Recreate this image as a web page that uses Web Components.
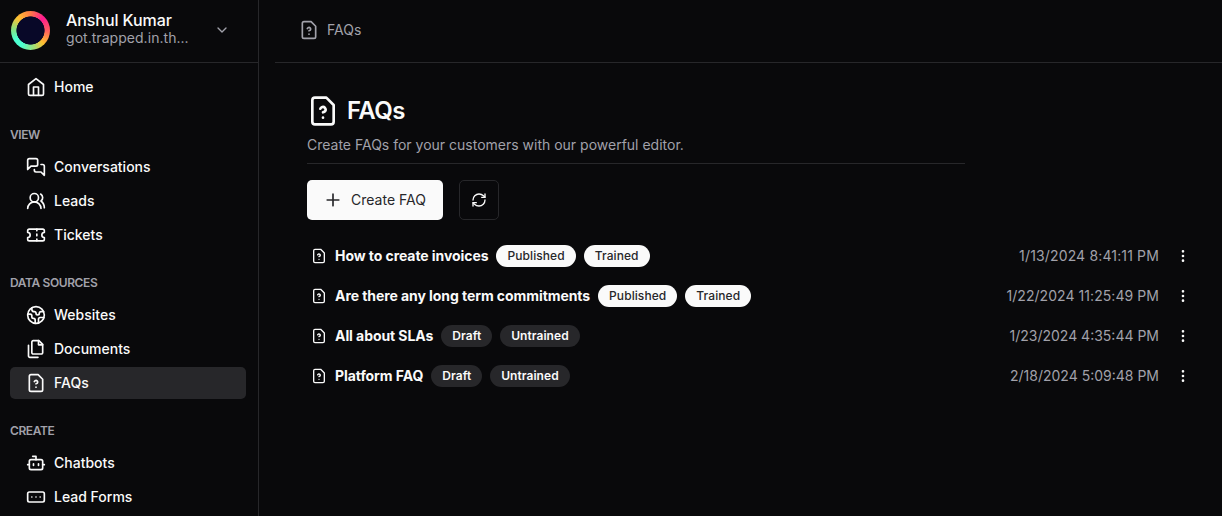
<!DOCTYPE html>
<html lang="en">
<head>
<meta charset="utf-8">
<title>FAQs</title>
<style>
html,body{margin:0;height:100%;background:#09090b;overflow:hidden}
body{font-family:Inter,"Liberation Sans",sans-serif;color:#fafafa;font-size:14px;line-height:20px}
</style>
</head>
<body>
<app-shell>
  <side-bar slot="side">
    <user-menu slot="user" name="Anshul Kumar" mail="got.trapped.in.th..."></user-menu>
    <nav-item icon="home">Home</nav-item>
    <nav-group label="VIEW">
      <nav-item icon="messages">Conversations</nav-item>
      <nav-item icon="users">Leads</nav-item>
      <nav-item icon="ticket">Tickets</nav-item>
    </nav-group>
    <nav-group label="DATA SOURCES">
      <nav-item icon="earth">Websites</nav-item>
      <nav-item icon="files">Documents</nav-item>
      <nav-item icon="faq" active>FAQs</nav-item>
    </nav-group>
    <nav-group label="CREATE">
      <nav-item icon="bot">Chatbots</nav-item>
      <nav-item icon="form">Lead Forms</nav-item>
    </nav-group>
  </side-bar>
  <top-bar icon="faq">FAQs</top-bar>
  <page-heading icon="faq"><span slot="title">FAQs</span>Create FAQs for your customers with our powerful editor.</page-heading>
  <action-bar>Create FAQ</action-bar>
  <faq-row style="--date-tracking:.15px" date="1/13/2024 8:41:11 PM">How to create invoices<status-badge slot="tags" on>Published</status-badge><status-badge slot="tags" on>Trained</status-badge></faq-row>
  <faq-row style="--date-tracking:.06px" date="1/22/2024 11:25:49 PM">Are there any long term commitments<status-badge slot="tags" on>Published</status-badge><status-badge slot="tags" on>Trained</status-badge></faq-row>
  <faq-row date="1/23/2024 4:35:44 PM">All about SLAs<status-badge slot="tags">Draft</status-badge><status-badge slot="tags">Untrained</status-badge></faq-row>
  <faq-row date="2/18/2024 5:09:48 PM">Platform FAQ<status-badge slot="tags">Draft</status-badge><status-badge slot="tags">Untrained</status-badge></faq-row>
</app-shell>
<script>
const ICONS = {
  home:'<path d="m3 9 9-7 9 7v11a2 2 0 0 1-2 2H5a2 2 0 0 1-2-2z"/><path d="M9 22V12h6v10"/>',
  messages:'<path d="M14 9a2 2 0 0 1-2 2H6l-4 4V4c0-1.1.9-2 2-2h8a2 2 0 0 1 2 2v5Z"/><path d="M18 9h2a2 2 0 0 1 2 2v11l-4-4h-6a2 2 0 0 1-2-2v-1"/>',
  users:'<path d="M18 21a8 8 0 0 0-16 0"/><circle cx="10" cy="8" r="5"/><path d="M22 20c0-3.37-2-6.5-4-8a5 5 0 0 0-.45-8.3"/>',
  ticket:'<path d="M2 9a3 3 0 0 1 0 6v2a2 2 0 0 0 2 2h16a2 2 0 0 0 2-2v-2a3 3 0 0 1 0-6V7a2 2 0 0 0-2-2H4a2 2 0 0 0-2 2Z"/><path d="M13 5v2M13 17v2M13 11v2"/>',
  earth:'<path d="M21.54 15H17a2 2 0 0 0-2 2v4.54"/><path d="M7 3.34V5a3 3 0 0 0 3 3a2 2 0 0 1 2 2c0 1.1.9 2 2 2a2 2 0 0 0 2-2c0-1.1.9-2 2-2h3.17"/><path d="M11 21.95V18a2 2 0 0 0-2-2a2 2 0 0 1-2-2v-1a2 2 0 0 0-2-2H2.05"/><circle cx="12" cy="12" r="10"/>',
  files:'<path d="M15.5 2H8.6c-.4 0-.8.2-1.1.5-.3.3-.5.7-.5 1.1v12.8c0 .4.2.8.5 1.1.3.3.7.5 1.1.5h9.8c.4 0 .8-.2 1.1-.5.3-.3.5-.7.5-1.1V6.5L15.5 2z"/><path d="M3 7.6v12.8c0 .4.2.8.5 1.1.3.3.7.5 1.1.5h9.8"/><path d="M15 2v5h5"/>',
  faq:'<path d="M14.5 2H6a2 2 0 0 0-2 2v16a2 2 0 0 0 2 2h12a2 2 0 0 0 2-2V7.5L14.5 2z"/><path d="M10 10.3c.2-.4.5-.8.9-1a2.1 2.1 0 0 1 2.6.4c.3.4.5.8.5 1.3 0 1.3-2 2-2 2"/><path d="M12 17h.01"/>',
  bot:'<path d="M12 8V4H8"/><rect width="16" height="12" x="4" y="8" rx="2"/><path d="M2 14h2M20 14h2M15 13v2M9 13v2"/>',
  form:'<rect width="20" height="12" x="2" y="6" rx="2"/><path d="M12 12h.01M17 12h.01M7 12h.01"/>',
  refresh:'<path d="M3 12a9 9 0 0 1 9-9 9.75 9.75 0 0 1 6.74 2.74L21 8"/><path d="M21 3v5h-5"/><path d="M21 12a9 9 0 0 1-9 9 9.75 9.75 0 0 1-6.74-2.74L3 16"/><path d="M8 16H3v5"/>',
  plus:'<path d="M5 12h14M12 5v14"/>',
  down:'<path d="m6 9 6 6 6-6"/>',
  more:'<circle cx="12" cy="12" r="1"/><circle cx="12" cy="5" r="1"/><circle cx="12" cy="19" r="1"/>'
};
const define = (name, render) => customElements.define(name, class extends HTMLElement {
  connectedCallback() {
    if (this.shadowRoot) return;
    this.attachShadow({mode:'open'}).innerHTML = render(this);
  }
});
const icon = (name, size) => `<ui-icon name="${name}" size="${size}"></ui-icon>`;

define('ui-icon', e => `<style>:host{display:block;flex:none;width:${e.getAttribute('size')}px;height:${e.getAttribute('size')}px}svg{display:block;width:100%;height:100%}</style>
<svg viewBox="0 0 24 24" fill="none" stroke="currentColor" stroke-width="2" stroke-linecap="round" stroke-linejoin="round">${ICONS[e.getAttribute('name')]}</svg>`);

define('app-shell', () => `<style>:host{display:flex;height:100vh}main{flex:1;min-width:0;padding-left:16px}</style>
<slot name="side"></slot><main><slot></slot></main>`);

define('side-bar', () => `<style>:host{display:block;flex:none;box-sizing:border-box;width:259px;height:100%;overflow:hidden;border-right:1px solid #27272a}nav{padding:8px 12px 0 10px}</style>
<slot name="user"></slot><nav><slot></slot></nav>`);

define('user-menu', e => `<style>
:host{display:flex;align-items:center;box-sizing:border-box;height:63px;padding:0 28px 3px 11px;border-bottom:1px solid #27272a}
.ring{flex:none;width:39px;height:39px;margin-top:1px;border-radius:50%;background:radial-gradient(circle,#080828 13.8px,transparent 14.4px),conic-gradient(from 0deg,#ff7a48,#ff1a90 45deg,#ff5c60 90deg,#ffc030 135deg,#a8dc70 165deg,#4cffd0 210deg,#4cffd0 240deg,#88e080 275deg,#ffc030 315deg,#ff7a48)}
.who{flex:1;margin-left:16px;padding-bottom:1px}
.name{font-size:16px;font-weight:500;line-height:18px;letter-spacing:-.08px}
.mail{color:#a1a1aa;line-height:18px;letter-spacing:.04px}
ui-icon{color:#a1a1aa}
</style><div class="ring"></div><div class="who"><div class="name">${e.getAttribute('name')}</div><div class="mail">${e.getAttribute('mail')}</div></div>${icon('down',16)}`);

define('nav-group', e => `<style>:host{display:block;padding-top:22px}.label{font-size:12px;font-weight:600;line-height:16px;letter-spacing:-.4px;color:#a1a1aa;margin-bottom:8px}</style>
<div class="label">${e.getAttribute('label')}</div><slot></slot>`);

define('nav-item', e => `<style>:host{display:flex;align-items:center;gap:8px;height:32px;margin-bottom:2px;padding-left:16px;border-radius:5px;font-weight:500}:host([active]){background:#27272a}</style>
${icon(e.getAttribute('icon'),20)}<span><slot></slot></span>`);

define('top-bar', e => `<style>:host{display:flex;align-items:center;gap:8px;box-sizing:border-box;height:63px;padding:0 0 2px 24px;border-bottom:1px solid #27272a;color:#a1a1aa}</style>
${icon(e.getAttribute('icon'),20)}<span><slot></slot></span>`);

define('page-heading', e => `<style>:host{display:block;width:658px;margin:30px 0 0 32px;padding-bottom:8px;border-bottom:1px solid #27272a}
h1{display:flex;align-items:center;gap:8px;margin:0 0 6px;font-size:24px;line-height:36px;font-weight:600;letter-spacing:-.6px}p{margin:0;color:#a1a1aa}</style>
<h1>${icon(e.getAttribute('icon'),32)}<slot name="title"></slot></h1><p><slot></slot></p>`);

define('action-bar', () => `<style>:host{display:flex;gap:16px;margin:16px 0 16px 32px}
button{display:flex;align-items:center;justify-content:center;box-sizing:border-box;height:40px;padding:0;border:0;border-radius:5px;font:inherit}
.new{width:136px;gap:8px;padding-right:1px;background:#fafafa;color:#27272a;letter-spacing:.03px}.sync{width:40px;background:none;border:1px solid #27272a;color:#fafafa}</style>
<button class="new">${icon('plus',20)}<span><slot></slot></span></button><button class="sync" aria-label="Refresh">${icon('refresh',16)}</button>`);

define('faq-row', e => `<style>:host{display:flex;align-items:center;gap:8px;height:40px;margin:0 31px 0 36px}
.t{font-weight:650;letter-spacing:-.07px}.d{margin-left:auto;margin-right:8px;color:#a1a1aa;letter-spacing:var(--date-tracking,0)}</style>
${icon('faq',16)}<span class="t"><slot></slot></span><slot name="tags"></slot><span class="d">${e.getAttribute('date')}</span>${icon('more',16)}`);

define('status-badge', () => `<style>:host{display:block;padding:3px 11px;border-radius:11px;font-size:12px;line-height:16px;font-weight:600;letter-spacing:.05px;background:#27272a;color:#fafafa}:host([on]){background:#fafafa;color:#27272a;font-weight:500;letter-spacing:.08px}</style><slot></slot>`);
</script>
</body>
</html>
